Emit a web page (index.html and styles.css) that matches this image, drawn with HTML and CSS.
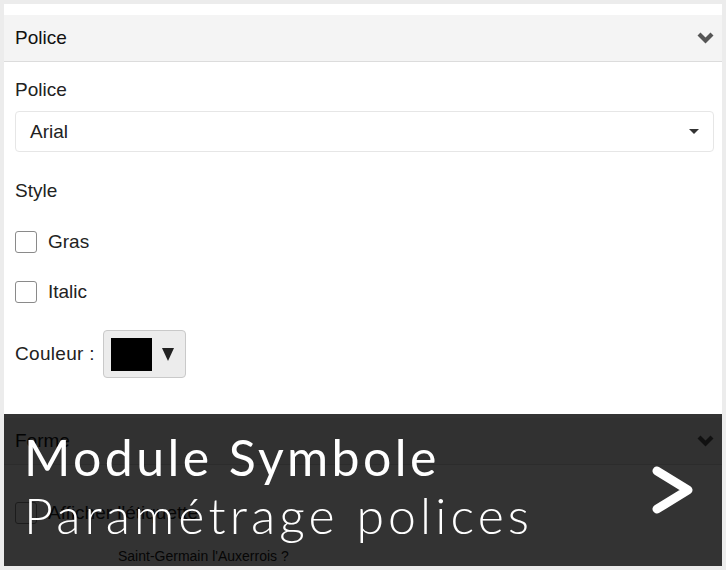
FILE: index.html
```html
<!DOCTYPE html>
<html lang="fr">
<head>
    <meta charset="utf-8" />
    <title>Module Symbole</title>
    <link rel="stylesheet" href="styles.css">
</head>
<body>
    <div class="cadre">
        <div class="panneau">
            <div class="entete">
                <span>Police</span>
                <svg class="chevron" width="17" height="12" viewBox="0 0 17 12"><path d="M0.5 3.5 L3.5 0.5 L8.5 5.5 L13.5 0.5 L16.5 3.5 L8.5 11.5 Z" fill="#555"/></svg>
            </div>
            <div class="contenu">
                <div class="libelle">Police</div>
                <div class="liste">
                    <span>Arial</span>
                    <svg width="10" height="6" viewBox="0 0 10 6"><path d="M0 0 H10 L5 5 Z" fill="#333"/></svg>
                </div>
                <div class="libelle style">Style</div>
                <label class="case"><span class="boite"></span>Gras</label>
                <label class="case"><span class="boite"></span>Italic</label>
                <div class="couleur">
                    <span>Couleur :</span>
                    <div class="bouton-couleur">
                        <span class="echantillon"></span>
                        <svg width="12" height="13" viewBox="0 0 12 13"><path d="M0 0 H12 L6 13 Z" fill="#222"/></svg>
                    </div>
                </div>
            </div>
            <div class="entete forme">
                <span>Forme</span>
                <svg class="chevron" width="17" height="12" viewBox="0 0 17 12"><path d="M0.5 3.5 L3.5 0.5 L8.5 5.5 L13.5 0.5 L16.5 3.5 L8.5 11.5 Z" fill="#555"/></svg>
            </div>
            <div class="contenu">
                <label class="case etiquette"><span class="boite"></span>Afficher l'étiquette</label>
                <div class="apercu">Saint-Germain l'Auxerrois ?</div>
            </div>
        </div>

        <!-- bandeau du titre par-dessus -->
        <div class="bandeau">
            <div class="titres">
                <div class="titre">Module Symbole</div>
                <div class="sous-titre">Paramétrage polices</div>
            </div>
            <svg class="fleche" width="44" height="48" viewBox="0 0 44 48"><polyline points="6,5 37,24 6,43" fill="none" stroke="#fff" stroke-width="9" stroke-linecap="round" stroke-linejoin="round"/></svg>
        </div>
    </div>
</body>
</html>
```

FILE: styles.css
```css
body {
    margin: 0;
    font-family: "Liberation Sans", Arial, sans-serif;
    color: #222;
}

.cadre {
    width: 718px;
    height: 562px;
    border: 4px solid #ececec;
    background-color: #fff;
    position: relative;
    overflow: hidden;
}

.panneau {
    padding-top: 11px;
}

.entete {
    height: 46px;
    display: flex;
    align-items: center;
    justify-content: space-between;
    padding: 0 8px 0 11px;
    background-color: #f4f4f4;
    border-bottom: 1px solid #dcdcdc;
    font-size: 19px;
    color: #111;
}

.entete.forme {
    margin-top: 40px;
}

.contenu {
    padding: 0 8px 0 11px;
    font-size: 19px;
}

.libelle {
    margin-top: 17px;
    line-height: 22px;
}

.libelle.style {
    margin-top: 28px;
}

.liste {
    margin-top: 10px;
    height: 39px;
    border: 1px solid #e6e6e6;
    border-radius: 4px;
    display: flex;
    align-items: center;
    justify-content: space-between;
    padding: 0 14px 0 14px;
}

.case {
    display: flex;
    align-items: center;
    gap: 11px;
    margin-top: 28px;
    line-height: 22px;
}

.case + .case {
    margin-top: 28px;
}

.libelle.style + .case {
    margin-top: 29px;
}

.boite {
    width: 20px;
    height: 20px;
    border: 1.5px solid #8a8a8a;
    border-radius: 3px;
    background-color: #fff;
}

.couleur {
    display: flex;
    align-items: center;
    gap: 8px;
    margin-top: 27px;
    letter-spacing: 0.3px;
}

.bouton-couleur {
    width: 83px;
    height: 48px;
    box-sizing: border-box;
    background-color: #ececec;
    border: 1px solid #c9c9c9;
    border-radius: 4px;
    display: flex;
    align-items: center;
    gap: 10px;
    padding-left: 7px;
}

.echantillon {
    width: 41px;
    height: 33px;
    background-color: #000;
}

.case.etiquette {
    margin-top: 37px;
}

.apercu {
    margin: 24px 0 0 103px;
    font-size: 14px;
}

/* bandeau sombre en bas */
.bandeau {
    position: absolute;
    left: 0;
    right: 0;
    bottom: 0;
    height: 152px;
    background-color: rgba(0, 0, 0, 0.8);
    display: flex;
    align-items: center;
    justify-content: space-between;
    padding: 0 27px 0 20px;
    color: #fff;
    font-family: Lato, "Open Sans", sans-serif;
}

.titres {
    margin-top: -8px;
}

.titre {
    font-size: 50px;
    line-height: 58px;
    letter-spacing: 3.4px;
}

.sous-titre {
    font-size: 50px;
    font-weight: 300;
    line-height: 58px;
    letter-spacing: 4.1px;
}
```
